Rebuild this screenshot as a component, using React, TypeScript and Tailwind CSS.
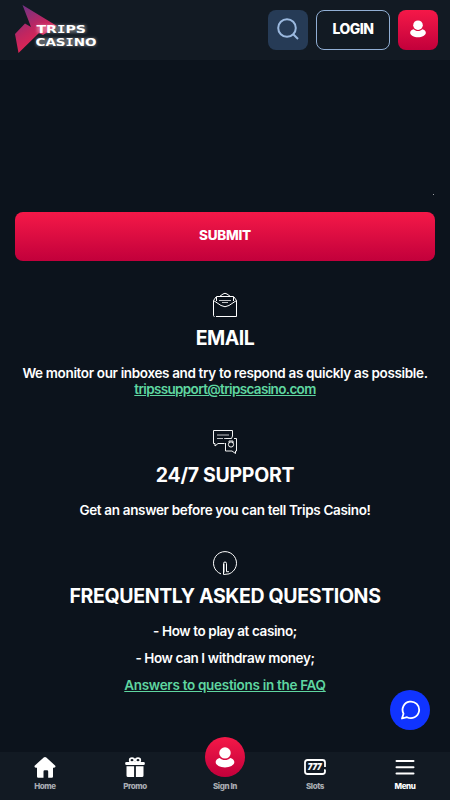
import type { ReactNode } from 'react';

function UserGlyph({ className }: { className: string }) {
  return (
    <svg viewBox="0 0 20 22" className={className} fill="#fff">
      <ellipse cx="10" cy="6.200" rx="6" ry="5.900" />
      <path d="M4.600 11.400c1.400 1.500 3.200 2.200 5.400 2.200s4-.7 5.400-2.200c2.500.6 4.400 2.200 4.400 4.300 0 3.300-4.800 5.700-9.800 5.700S.2 19 .2 15.700c0-2.100 1.900-3.700 4.400-4.300Z" />
    </svg>
  );
}

function Logo() {
  return (
    <svg width="90" height="52" viewBox="12 2 90 52" className="overflow-visible">
      <defs>
        <linearGradient id="wing" x1="0" y1="0" x2="0.55" y2="1">
          <stop offset="0" stopColor="#61358d" />
          <stop offset="0.55" stopColor="#c02660" />
          <stop offset="1" stopColor="#f1254e" />
        </linearGradient>
        <filter id="glow" x="-20%" y="-40%" width="140%" height="180%">
          <feGaussianBlur stdDeviation="1.600" />
        </filter>
      </defs>
      <path d="M22.500 5 57 26 43 35 39 33 18.500 53 15 34 25 23.500 31 27Z" fill="url(#wing)" />
      <g fontFamily="'DejaVu Sans', 'Liberation Sans', sans-serif" fontWeight="700" fontSize="10.600" fill="#fff">
        <g filter="url(#glow)" opacity="0.3" aria-hidden="true">
          <rect x="37" y="25" width="49" height="8" />
          <rect x="36" y="38" width="60" height="8" />
        </g>
        <text x="36.500" y="33" textLength="49.500" lengthAdjust="spacingAndGlyphs">
          TR<tspan fontFamily="'DejaVu Sans Mono', monospace">I</tspan>PS
        </text>
        <text x="35.500" y="46" textLength="61" lengthAdjust="spacingAndGlyphs">
          CAS<tspan fontFamily="'DejaVu Sans Mono', monospace">I</tspan>NO
        </text>
      </g>
    </svg>
  );
}

function EmailIcon() {
  return (
    <svg width="26" height="26" viewBox="0 0 26 26" fill="none" stroke="#fff" strokeLinejoin="round">
      <path d="M4 24.500H24.500V8.500L22 5M1.500 23.500V8.500L4 5M1.500 8.500 9 13.500q4 2.500 8 0l7.500-5M4.500 9V4.500h17V9M7.500 4.500 11 2q2-1.500 4 0l3.500 2.500" />
      <path d="M7 8.500h12M10 10.500h6" opacity=".75" />
      <path d="M1.500 23.500q0 1 1 1" />
    </svg>
  );
}

function SupportIcon() {
  return (
    <svg width="26" height="26" viewBox="0 0 26 26" fill="none" stroke="#fff" strokeWidth=".95">
      <path d="M20.500 7V1.500h-19v13H3V17l3-2.500h6.500M13.500 14V22H20l3.500 2.500V22h1V9.500H22M20.500 7l-1 2.500h-6" />
      <path d="M5 6h12M5 9.500h6M12 9.500h2" opacity=".8" />
      <circle cx="19" cy="15.500" r="2.600" />
      <path d="M17 13.500V12h4v2" />
    </svg>
  );
}

function FaqIcon() {
  return (
    <svg width="26" height="26" viewBox="0 0 26 26" fill="none" stroke="#fff" strokeWidth="1">
      <path d="M9 23.900A11.500 11.500 0 1 1 17 23.900L11.500 24.500V13.500q0-1.500 1.500-1.500t1.500 1.500v8.200H17" />
      <path d="M12.500 13.500v9" opacity=".5" />
    </svg>
  );
}

function Section({ icon, title, tracking, children }: { icon: ReactNode; title: string; tracking: string; children: ReactNode }) {
  return (
    <section className="flex flex-col items-center text-center">
      <div className="-mt-px mb-[7px] h-[26px]">{icon}</div>
      <h2 className={`mb-4 h-6 whitespace-nowrap text-[19.5px] leading-[26px] font-bold ${tracking}`}>{title}</h2>
      <div className="text-[13.5px] leading-4 font-semibold whitespace-nowrap">{children}</div>
    </section>
  );
}

function NavItem({ label, children, active }: { label: string; children?: ReactNode; active?: boolean }) {
  return (
    <a className="flex h-12 flex-1 flex-col items-center">
      <span className="flex h-[29px] items-end justify-center">{children}</span>
      <span className={`h-[15px] text-[8px] leading-[10px] font-extrabold tracking-[-0.4px] ${active ? 'text-white' : 'text-[#a8acb2]'}`}>{label}</span>
    </a>
  );
}

export default function App() {
  return (
    <div className="flex h-[800px] w-[450px] flex-col overflow-hidden bg-[#0c131c] font-['Inter','Liberation_Sans',sans-serif] text-white">
      <header className="flex h-[60px] shrink-0 items-center bg-[#121a23] px-3">
        <div className="-mt-1 flex-1"><Logo /></div>
        <div className="flex gap-2">
          <button className="flex size-10 items-center justify-center rounded-lg bg-[#263b56]">
            <svg width="22" height="22" viewBox="0 0 22 22" fill="none" stroke="#9bb9df" strokeWidth="2" className="-mt-0.5">
              <circle cx="10" cy="10" r="8.800" />
              <path d="m16.500 16.500 4.500 4.500" />
            </svg>
          </button>
          <button className="h-10 w-[74px] rounded-lg border border-[#91afd5] pb-0.5 text-[14px] leading-4 font-extrabold tracking-[-0.5px]">LOGIN</button>
          <button className="flex size-10 items-center justify-center rounded-lg bg-linear-to-b from-[#f51848] to-[#c2003b]">
            <UserGlyph className="-mt-0.5 h-[18px] w-4" />
          </button>
        </div>
      </header>

      <main className="flex flex-1 flex-col px-[15px]">
        <div className="flex h-[152px] items-end justify-end pr-px pb-[17px]">
          <i className="size-px bg-[#9b9fa4]" />
        </div>
        <button className="h-[49px] shrink-0 rounded-lg bg-linear-to-b from-[#f51848] to-[#c2003b] pb-0.5 text-[13.5px] font-extrabold tracking-[-0.25px]">SUBMIT</button>
        <div className="flex flex-col gap-[33px] pt-8">
          <Section icon={<EmailIcon />} title="EMAIL" tracking="tracking-[-0.5px]">
            <p className="tracking-[-0.35px]">We monitor our inboxes and try to respond as quickly as possible.</p>
            <a className="block tracking-[-0.65px] text-[#5fd6a0] underline">tripssupport@tripscasino.com</a>
          </Section>
          <Section icon={<SupportIcon />} title="24/7 SUPPORT" tracking="tracking-[-0.3px]">
            <p className="tracking-[-0.335px]">Get an answer before you can tell Trips Casino!</p>
          </Section>
          <Section icon={<FaqIcon />} title="FREQUENTLY ASKED QUESTIONS" tracking="tracking-[-0.35px]">
            <ul className="flex flex-col gap-[11px]">
              <li className="tracking-[-0.39px]">- How to play at casino;</li>
              <li className="tracking-[-0.4px]">- How can I withdraw money;</li>
              <li><a className="tracking-[-0.3px] text-[#5fd6a0] underline">Answers to questions in the FAQ</a></li>
            </ul>
          </Section>
        </div>
      </main>

      <nav className="relative flex h-12 shrink-0 bg-[#121a23]">
        <NavItem label="Home">
          <svg width="22" height="24" viewBox="0 0 22 24" fill="#fff" className="-translate-y-[3px]">
            <path d="M9.700 3.500q1.300-1 2.600 0l9 8.200q.8 1.800-1.300 2H19v8.800q0 1.200-1.200 1.200h-3.600v-6.200q0-1.200-1.200-1.200h-2.300q-1.200 0-1.200 1.200v6.200H4.200Q3 23.700 3 22.500v-8.800H1.800q-1.800-.2-1.200-2Z" />
          </svg>
        </NavItem>
        <NavItem label="Promo">
          <svg width="20" height="24" viewBox="0 0 20 24" className="-translate-y-0.5">
            <g fill="none" stroke="#fff" strokeWidth="1.700"><ellipse cx="7" cy="5.200" rx="2.300" ry="2" /><ellipse cx="13" cy="5.200" rx="2.300" ry="2" /></g>
            <path fill="#fff" d="M1.500 7h17q1.300 0 1.300 1v1q0 1-1.300 1h-17Q.2 10 .2 9V8q0-1 1.300-1Zm0 4.300h7.600V22H3q-1.500 0-1.500-1.500Zm9.400 0h7.600v9.200Q18.500 22 17 22h-6.100Z" />
          </svg>
        </NavItem>
        <NavItem label="Sign In" />
        <NavItem label="Slots">
          <svg width="22" height="24" viewBox="0 0 22 24" fill="none" stroke="#fff" className="-translate-y-[3px]">
            <path strokeWidth="1.800" strokeLinejoin="round" d="M21 13V8.500Q21 6 18.500 6h-15Q1 6 1 8.500v9Q1 20 3.500 20h15q2.500 0 2.500-2.500v-1.300h-1" />
            <text x="3.700" y="16.300" textLength="14" lengthAdjust="spacingAndGlyphs" fill="#fff" strokeWidth=".2" fontFamily="Inter, sans-serif" fontStyle="italic" fontWeight="900" fontSize="9">777</text>
          </svg>
        </NavItem>
        <NavItem label="Menu" active>
          <svg width="20" height="24" viewBox="0 0 20 24" stroke="#fff" strokeWidth="2" strokeLinecap="round">
            <path d="M1.500 4h17M1.500 10.300h17M1.500 16.500h17" />
          </svg>
        </NavItem>
        <div className="absolute top-[-15px] left-[205px] flex size-10 items-center justify-center rounded-full bg-linear-to-b from-[#f51848] to-[#c2003b]">
          <UserGlyph className="h-[21px] w-5" />
        </div>
        <div className="absolute top-[-62px] right-5 flex size-10 items-center justify-center rounded-full bg-[#1034ff]">
          <svg width="20" height="20" viewBox="0 0 20 20" fill="none" stroke="#fff" strokeWidth="1.800" strokeLinejoin="round" className="translate-x-px">
            <path d="M2.500 13.700A8.300 8.300 0 1 1 6 17.200L1 18.500Z" />
          </svg>
        </div>
      </nav>
    </div>
  );
}
